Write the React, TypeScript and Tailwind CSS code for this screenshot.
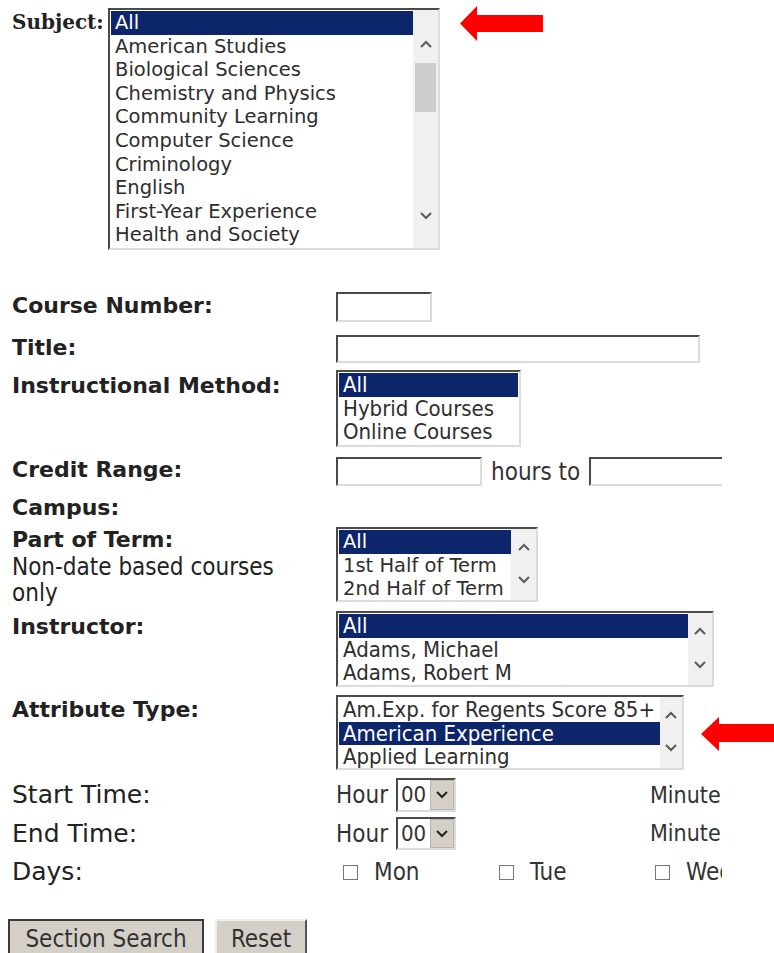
import type { ReactNode } from "react";

// classic Banner "Class Search" form
const verdana = "font-['DejaVu_Sans',Verdana,sans-serif]";
const tahoma = "font-['DejaVu_Sans_Condensed','DejaVu_Sans',sans-serif]";
const sunken =
  "border-2 border-t-[#4a4a4a] border-l-[#4a4a4a] border-r-[#dcdcdc] border-b-[#dcdcdc] bg-white";

function Chevron({ up, color = "#5a5a5a" }: { up?: boolean; color?: string }) {
  return (
    <svg width="14" height="14" viewBox="0 0 14 14" className="block">
      <polyline
        points={up ? "2,10 7,5 12,10" : "2,4 7,9 12,4"}
        fill="none"
        stroke={color}
        strokeWidth="2"
      />
    </svg>
  );
}

function Arrow({ className }: { className?: string }) {
  return (
    <svg width="83" height="35" viewBox="0 0 83 35" className={className}>
      <polygon points="0,17.5 17,0 17,9 83,9 83,26 17,26 17,35" fill="#ff0000" />
    </svg>
  );
}

function ListBox({
  items,
  selected,
  className,
  font,
  scroll,
}: {
  items: string[];
  selected: number;
  className: string;
  font: string;
  scroll?: ReactNode;
}) {
  return (
    <div className={`flex shrink-0 ${sunken} ${className}`}>
      <ul className={`flex-1 min-w-0 overflow-hidden pl-px pt-px ${font}`}>
        {items.map((it, i) => (
          <li
            key={it}
            className={`h-[23.6px] leading-[23.6px] pl-1 whitespace-nowrap ${
              i === selected ? "bg-[#0c256b] text-white" : "text-[#2e2e2e]"
            }`}
          >
            {it}
          </li>
        ))}
      </ul>
      {scroll}
    </div>
  );
}

function SmallScroll({ width }: { width: string }) {
  return (
    <div className={`flex flex-col items-center justify-between bg-[#f0f0f0] pt-[11px] pb-[13px] ${width}`}>
      <Chevron up />
      <Chevron />
    </div>
  );
}

function TextBox({ className }: { className: string }) {
  return <div className={`shrink-0 ${sunken} ${className}`} />;
}

function HourSelect() {
  return (
    <div className={`flex w-[60px] h-full ${sunken}`}>
      <span className={`flex-1 pl-[3px] text-[22px] leading-[29px] text-[#333] ${tahoma}`}>00</span>
      <span className="flex w-[24px] items-center justify-center bg-[#d4d0c8] border border-[#b8b4ac]">
        <Chevron color="#222" />
      </span>
    </div>
  );
}

function Label({ children, className = "" }: { children: ReactNode; className?: string }) {
  return (
    <div className={`w-[324px] shrink-0 text-[22px] font-bold text-[#222] leading-[24px] ${verdana} ${className}`}>
      {children}
    </div>
  );
}

export default function App() {
  const subjects = [
    "All",
    "American Studies",
    "Biological Sciences",
    "Chemistry and Physics",
    "Community Learning",
    "Computer Science",
    "Criminology",
    "English",
    "First-Year Experience",
    "Health and Society",
  ];

  return (
    <div className="w-[774px] h-[953px] overflow-hidden bg-white pl-[12px] pt-[8px]">
      {/* Subject */}
      <div className="flex items-start">
        <div className="w-[96px] mt-[2px] text-[20px] leading-[24px] font-bold text-[#222] font-['DejaVu_Serif',serif]">
          Subject:
        </div>
        <ListBox
          items={subjects}
          selected={0}
          font={`text-[19.5px] ${verdana}`}
          className="w-[332px] h-[242px]"
          scroll={
            <div className="flex w-[25px] flex-col items-center bg-[#f0f0f0] pt-[27px] pb-[25px]">
              <Chevron up />
              <div className="mt-[12px] h-[49px] w-[21px] bg-[#cdcdcd]" />
              <div className="flex-1" />
              <Chevron />
            </div>
          }
        />
        <Arrow className="ml-[20px] mt-[-2px]" />
      </div>

      {/* Course Number */}
      <div className="flex items-center mt-[42px] h-[30px]">
        <Label className="-mt-[3px]">Course Number:</Label>
        <TextBox className="w-[96px] h-[30px]" />
      </div>

      {/* Title */}
      <div className="flex items-center mt-[13px] h-[28px]">
        <Label className="-mt-[3px]">Title:</Label>
        <TextBox className="w-[364px] h-[28px]" />
      </div>

      {/* Instructional Method */}
      <div className="flex items-start mt-[7px] h-[77px]">
        <Label className="mt-[4px]">Instructional Method:</Label>
        <ListBox
          items={["All", "Hybrid Courses", "Online Courses"]}
          selected={0}
          font={`text-[22px] ${tahoma}`}
          className="w-[185px] h-[77px] pr-px"
        />
      </div>

      {/* Credit Range */}
      <div className="flex items-center mt-[10px] h-[29px]">
        <Label className="-mt-[4px]">Credit Range:</Label>
        <div className={`flex items-center w-[386px] overflow-hidden text-[24px] text-[#333] ${tahoma}`}>
          <TextBox className="w-[146px] h-[29px]" />
          <span className="ml-[9px] mr-[9px] whitespace-nowrap">hours to</span>
          <TextBox className="w-[146px] h-[29px]" />
        </div>
      </div>

      {/* Campus */}
      <div className="flex mt-[10px] h-[24px]">
        <Label>Campus:</Label>
      </div>

      {/* Part of Term */}
      <div className="flex items-start mt-[7px] h-[75px]">
        <div className={`w-[324px] shrink-0 text-[24px] leading-[26.5px] text-[#222] ${tahoma}`}>
          <div className={`font-bold text-[22px] ${verdana}`}>Part of Term:</div>
          <div>Non-date based courses</div>
          <div>only</div>
        </div>
        <ListBox
          items={["All", "1st Half of Term", "2nd Half of Term"]}
          selected={0}
          font={`text-[19.5px] ${verdana}`}
          className="w-[202px] h-[75px]"
          scroll={<SmallScroll width="w-[25px]" />}
        />
      </div>

      {/* Instructor */}
      <div className="flex items-start mt-[9px] h-[76px]">
        <Label className="mt-[4px]">Instructor:</Label>
        <ListBox
          items={["All", "Adams, Michael", "Adams, Robert M"]}
          selected={0}
          font={`text-[22px] ${tahoma}`}
          className="w-[378px] h-[76px]"
          scroll={<SmallScroll width="w-[24px]" />}
        />
      </div>

      {/* Attribute Type */}
      <div className="flex items-start mt-[8px] h-[75px]">
        <Label className="mt-[3px]">Attribute Type:</Label>
        <ListBox
          items={["Am.Exp. for Regents Score 85+", "American Experience", "Applied Learning"]}
          selected={1}
          font={`text-[22px] ${tahoma}`}
          className="w-[348px] h-[75px]"
          scroll={<SmallScroll width="w-[22px]" />}
        />
        <svg width="73" height="34" viewBox="0 0 73 34" className="ml-[17px] mt-[22px]">
          <polygon points="0,17 18,0 18,7 73,7 73,25 18,25 18,34" fill="#ff0000" />
        </svg>
      </div>

      {/* Start / End time */}
      {[
        ["Start Time:", "mt-[8px] h-[34px]"],
        ["End Time:", "mt-[5px] h-[33px]"],
      ].map(([label, row]) => (
        <div key={label} className={`flex items-center text-[#333] ${tahoma} ${row}`}>
          <div className={`w-[324px] shrink-0 text-[25px] text-[#222] ${verdana}`}>{label}</div>
          <div className="flex items-center w-[314px] h-full text-[24px]">
            <span className="mr-[8px]">Hour</span>
            <HourSelect />
          </div>
          <span className="text-[23px]">Minute</span>
        </div>
      ))}

      {/* Days */}
      <div className={`flex items-center mt-[10px] h-[24px] text-[#333] ${tahoma}`}>
        <div className={`w-[324px] shrink-0 text-[25px] text-[#222] ${verdana}`}>Days:</div>
        <div className="flex w-[386px] overflow-hidden text-[24px]">
          {["Mon", "Tue", "Wed"].map((d) => (
            <label key={d} className="flex w-[156px] shrink-0 items-center pl-[7px]">
              <span className="w-[15px] h-[15px] border border-[#777] bg-white" />
              <span className="ml-[16px]">{d}</span>
            </label>
          ))}
        </div>
      </div>

      {/* Buttons */}
      <div className={`flex mt-[35px] -ml-[4px] gap-[11px] text-[24px] text-[#333] ${tahoma}`}>
        <button className="w-[196px] h-[38px] bg-[#d4d0c8] border-2 border-[#3a3a3a] border-b-0">
          Section Search
        </button>
        <button className="w-[92px] h-[38px] bg-[#d4d0c8] border-2 border-t-[#eeeeee] border-l-[#eeeeee] border-r-[#555] border-b-0">
          Reset
        </button>
      </div>
    </div>
  );
}
